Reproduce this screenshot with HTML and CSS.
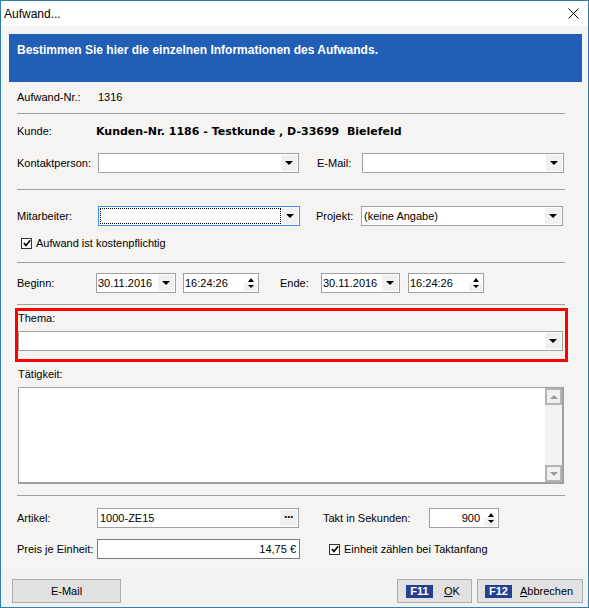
FILE: index.html
```html
<!DOCTYPE html>
<html lang="de">
<head>
<meta charset="utf-8">
<title>Aufwand...</title>
<link rel="stylesheet" href="styles.css">
</head>
<body>
<div class="window">
  <div class="titlebar">
    <span class="title">Aufwand...</span>
    <svg class="close" width="11" height="11" viewBox="0 0 11 11"><path d="M0.5 0.5 L10.5 10.5 M10.5 0.5 L0.5 10.5" stroke="#000" stroke-width="1" fill="none"/></svg>
  </div>
  <div class="content">
    <div class="band">Bestimmen Sie hier die einzelnen Informationen des Aufwands.</div>
    <div class="form">
      <div class="row r-nr"><span class="lbl lw81">Aufwand-Nr.:</span><span>1316</span></div>
      <div class="sep sep1"></div>
      <div class="row r-kunde"><span class="lbl lw79">Kunde:</span><span class="bold">Kunden-Nr. 1186 - Testkunde , D-33699&nbsp; Bielefeld</span></div>
      <div class="row r-kontakt">
        <span class="lbl lw81">Kontaktperson:</span>
        <div class="combo cw201"><span class="val"></span><span class="dd"><i class="tri"></i></span></div>
        <span class="lbl lw45 ml18">E-Mail:</span>
        <div class="combo cw202"><span class="val"></span><span class="dd"><i class="tri"></i></span></div>
      </div>
      <div class="sep sep2"></div>
      <div class="row r-mit">
        <span class="lbl lw81">Mitarbeiter:</span>
        <div class="combo cw202 focus"><span class="val"><span class="focusrect"></span></span><span class="dd"><i class="tri"></i></span></div>
        <span class="lbl lw45 ml16">Projekt:</span>
        <div class="combo cw202"><span class="val">(keine Angabe)</span><span class="dd"><i class="tri"></i></span></div>
      </div>
      <div class="row r-check">
        <span class="cb cb1"><svg width="8" height="8" viewBox="0 0 8 8"><path d="M0.8 4 L3 6.4 L7.2 1.2" stroke="#000" stroke-width="1.6" fill="none"/></svg></span>
        <span class="cblbl">Aufwand ist kostenpflichtig</span>
      </div>
      <div class="sep sep3"></div>
      <div class="row r-zeit">
        <span class="lbl lw79">Beginn:</span>
        <div class="date dw80"><span class="val">30.11.2016</span><span class="dd"><i class="tri"></i></span></div>
        <div class="time tw76 ml7"><span class="val">16:24:26</span><span class="spin"><i class="up"></i><i class="down"></i></span></div>
        <span class="lbl lw41 ml21">Ende:</span>
        <div class="date dw79"><span class="val">30.11.2016</span><span class="dd"><i class="tri"></i></span></div>
        <div class="time tw76 ml8"><span class="val">16:24:26</span><span class="spin"><i class="up"></i><i class="down"></i></span></div>
      </div>
      <div class="sep sep4"></div>
      <div class="redbox">
        <div class="thema-lbl">Thema:</div>
        <div class="combo thema-combo"><span class="val"></span><span class="dd"><i class="tri"></i></span></div>
      </div>
      <div class="taet-lbl">Tätigkeit:</div>
      <div class="textarea">
        <div class="ta-body"></div>
        <div class="sb">
          <span class="sbbtn"><i class="sbup"></i></span>
          <span class="sbbtn"><i class="sbdown"></i></span>
        </div>
      </div>
      <div class="sep sep5"></div>
      <div class="row r-artikel">
        <span class="lbl lw80">Artikel:</span>
        <div class="edit ew202"><span class="val">1000-ZE15</span><span class="dots">&middot;&middot;&middot;</span></div>
        <span class="lbl lw106 ml24">Takt in Sekunden:</span>
        <div class="time tw70"><span class="val right">900</span><span class="spin"><i class="up"></i><i class="down"></i></span></div>
      </div>
      <div class="row r-preis">
        <span class="lbl lw80">Preis je Einheit:</span>
        <div class="edit ew203 dark"><span class="val right">14,75 €</span></div>
        <span class="cb cb2"><svg width="8" height="8" viewBox="0 0 8 8"><path d="M0.8 4 L3 6.4 L7.2 1.2" stroke="#000" stroke-width="1.6" fill="none"/></svg></span>
        <span class="cblbl">Einheit zählen bei Taktanfang</span>
      </div>
    </div>
    <div class="footer">
      <button class="btn btn-mail">E-Mail</button>
      <div class="btngroup">
        <button class="btn btn-ok"><span class="badge">F11</span><span class="btntext"><u>O</u>K</span></button>
        <button class="btn btn-cancel"><span class="badge">F12</span><span class="btntext"><u>A</u>bbrechen</span></button>
      </div>
    </div>
  </div>
</div>
</body>
</html>
```

FILE: styles.css
```css
* { box-sizing: border-box; }
body {
  margin: 0;
  font-family: "Liberation Sans", Arial, sans-serif;
  font-size: 11px;
  color: #000;
  background: #fff;
}
.window {
  width: 589px;
  height: 608px;
  border: 1px solid #2f7fae;
  display: flex;
  flex-direction: column;
  background: #fff;
}
.titlebar {
  height: 25px;
  display: flex;
  align-items: center;
  justify-content: space-between;
  padding: 0 9px 0 3px;
  background: #fff;
}
.title { font-size: 12px; }
.close { display: block; }
.content {
  flex: 1;
  display: flex;
  flex-direction: column;
  background: #f5f4f2;
}
.band {
  margin: 8px 6px 0 8px;
  height: 48px;
  background: #215eb6;
  color: #fff;
  font-weight: bold;
  font-size: 12px;
  line-height: 14px;
  padding: 9px 0 0 8px;
}
.form { padding: 0 23px 0 16px; }
.row { display: flex; align-items: center; }
.lbl { flex: none; white-space: nowrap; }
.bold {
  font-family: "DejaVu Sans", Verdana, sans-serif;
  font-weight: bold;
  font-size: 11px;
  white-space: nowrap;
}
.sep { height: 1px; background: #a0a0a0; }

.r-nr { margin-top: 6px; height: 18px; }
.sep1 { margin-top: 7px; }
.r-kunde { margin-top: 8px; height: 18px; }
.r-kontakt { margin-top: 13px; height: 20px; }
.sep2 { margin-top: 16px; }
.r-mit { margin-top: 16px; height: 20px; }
.r-check { margin-top: 9px; height: 16px; padding-left: 4px; }
.sep3 { margin-top: 11px; }
.r-zeit { margin-top: 10px; height: 20px; }
.sep4 { margin-top: 11px; }
.sep5 { margin-top: 11px; }
.r-artikel { margin-top: 12px; height: 20px; }
.r-preis { margin-top: 11px; height: 20px; }

.lw41 { width: 41px; }
.lw45 { width: 45px; }
.lw79 { width: 79px; }
.lw80 { width: 80px; }
.lw81 { width: 81px; }
.lw106 { width: 106px; }
.ml7 { margin-left: 7px; }
.ml8 { margin-left: 8px; }
.ml16 { margin-left: 16px; }
.ml18 { margin-left: 18px; }
.ml21 { margin-left: 21px; }
.ml24 { margin-left: 24px; }

.combo, .date, .time, .edit {
  flex: none;
  display: flex;
  height: 20px;
  border: 1px solid #a0a0a0;
  background: #fff;
}
.cw201 { width: 201px; }
.cw202 { width: 202px; }
.dw80 { width: 80px; }
.dw79 { width: 79px; }
.tw76 { width: 76px; }
.tw70 { width: 70px; }
.ew202 { width: 202px; }
.ew203 { width: 203px; }
.val {
  flex: 1;
  padding-left: 2px;
  line-height: 18px;
  white-space: nowrap;
  overflow: hidden;
}
.val.right { text-align: right; padding-right: 3px; }
.date .val { padding-left: 1px; }
.dd {
  flex: none;
  width: 16px;
  margin: 1px;
  background: #f0f0f0;
  display: flex;
  align-items: center;
  justify-content: center;
}
.tri {
  width: 0;
  height: 0;
  border-left: 4px solid transparent;
  border-right: 4px solid transparent;
  border-top: 4px solid #000;
}
.focus { border-color: #3d8ee6; }
.focusrect {
  display: block;
  margin: 1px 0 1px -1px;
  height: 16px;
  border: 1px dotted #000;
}

.spin {
  flex: none;
  width: 13px;
  margin: 1px;
  display: flex;
  flex-direction: column;
  align-items: center;
  justify-content: center;
  gap: 3px;
  background: linear-gradient(#fff 50%, #f0f0f0 50%);
}
.up {
  width: 0; height: 0;
  border-left: 3.5px solid transparent;
  border-right: 3.5px solid transparent;
  border-bottom: 4px solid #000;
}
.down {
  width: 0; height: 0;
  border-left: 3px solid transparent;
  border-right: 3px solid transparent;
  border-top: 3px solid #000;
}
.time .val { padding-left: 1px; }

.cb {
  flex: none;
  width: 11px;
  height: 11px;
  border: 1px solid #333;
  background: #fff;
  display: flex;
  align-items: center;
  justify-content: center;
}
.cb svg { display: block; }
.cblbl { margin-left: 4px; white-space: nowrap; }
.cb2 { margin-left: 29px; }

.redbox {
  margin: 3px 0 0 -2px;
  width: 553px;
  height: 54px;
  border: 3px solid #ff0000;
}
.thema-lbl { height: 14px; line-height: 14px; }
.thema-combo { margin-top: 6px; width: 545px; }

.taet-lbl { margin-top: 5px; height: 14px; line-height: 14px; padding-left: 1px; }
.textarea {
  margin: 6px 0 0 1px;
  width: 546px;
  height: 97px;
  border: 1px solid #a0a0a0;
  border-right-width: 2px;
  border-bottom-width: 2px;
  background: #fff;
  display: flex;
}
.ta-body { flex: 1; }
.sb {
  width: 17px;
  display: flex;
  flex-direction: column;
  justify-content: space-between;
  background: repeating-conic-gradient(#ececec 0 25%, #fafafa 0 50%) 0 0 / 2px 2px;
}
.sbbtn {
  height: 17px;
  border: 2px solid #b4b4b4;
  background: #f0f0f0;
  display: flex;
  align-items: center;
  justify-content: center;
}
.sbup {
  width: 0; height: 0;
  border-left: 4px solid transparent;
  border-right: 4px solid transparent;
  border-bottom: 4px solid #9a9a9a;
}
.sbdown {
  width: 0; height: 0;
  border-left: 4px solid transparent;
  border-right: 4px solid transparent;
  border-top: 4px solid #9a9a9a;
}

.edit.dark { border-color: #7a7a7a; }
.dots {
  flex: none;
  width: 17px;
  margin: 1px;
  background: #f0f0f0;
  font-weight: bold;
  font-size: 12px;
  line-height: 15px;
  text-align: center;
  letter-spacing: -1px;
}

.footer {
  flex: 1;
  margin-top: 15px;
  background: #f2f2f3;
  display: flex;
  justify-content: space-between;
  align-items: flex-start;
  padding: 5px 5px 0 11px;
}
.btngroup { display: flex; gap: 5px; }
.btn {
  font-family: "Liberation Sans", Arial, sans-serif;
  font-size: 11px;
  color: #000;
  height: 24px;
  background: #e1e1e1;
  border: 1px solid #adadad;
  padding: 0;
  display: flex;
  align-items: center;
}
.btn-mail { width: 109px; justify-content: center; }
.btn-ok { width: 75px; padding-left: 8px; }
.btn-cancel { width: 106px; padding-left: 7px; }
.badge {
  background: #263f8f;
  color: #fff;
  font-weight: bold;
  height: 13px;
  line-height: 13px;
  width: 27px;
  text-align: center;
}
.btn-ok .btntext { margin-left: 11px; }
.btn-cancel .btntext { margin-left: 8px; }
.btntext u { text-decoration-thickness: 1px; text-underline-offset: 1px; }
```
